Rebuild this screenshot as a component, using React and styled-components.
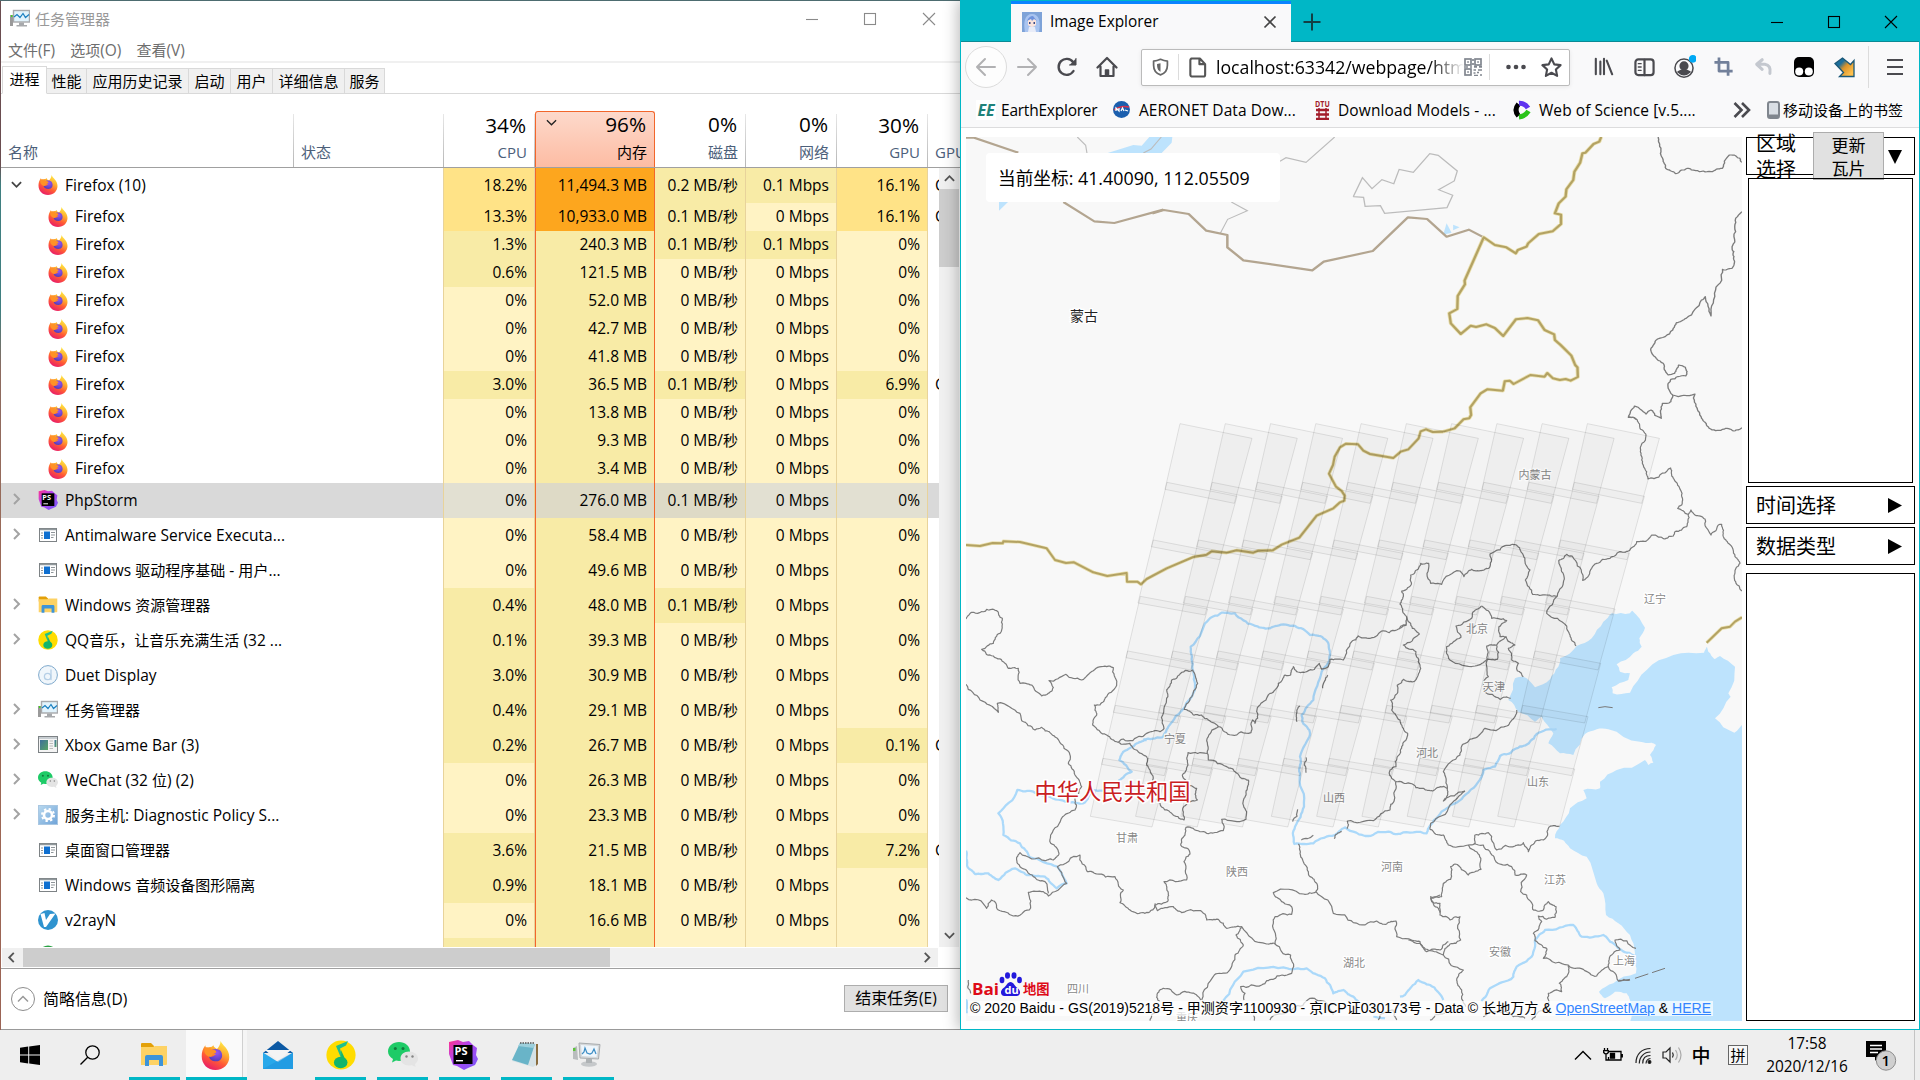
import React from "react";
import styled, { createGlobalStyle, css } from "styled-components";

const Global = createGlobalStyle`
  * { box-sizing: border-box; }
  html, body { margin: 0; padding: 0; overflow: hidden; }
  body { font-family: "Open Sans", "Noto Sans CJK SC", sans-serif; font-size: 15.5px; color: #000; }
  svg { display: block; flex: none; }
`;

/* ---------- shared ---------- */
const Han = styled.span`
  font-family: "Noto Sans CJK SC", sans-serif;
  font-size: ${(p) => p.$k}em;
  line-height: 0;
`;
const T = ({ children, k = 0.968 }) =>
  String(children)
    .split(/([\u3000-\u9fff\uff00-\uffef]+)/)
    .map((s, i) => (i % 2 ? <Han key={i} $k={k}>{s}</Han> : s));

const Screen = styled.div`
  width: 1920px;
  height: 1080px;
  display: grid;
  grid-template-rows: 1030px 50px;
  background: #eee;
`;
const Desktop = styled.div`
  display: flex;
  overflow: hidden;
  background: linear-gradient(#4d6c70 0 1px, #6a4d50 1px 16%, #3f7f80 18% 30%, #8d6b60 36%, #a06a55 60%, #9b6455);
`;

/* ---------- icons ---------- */
const FirefoxIcon = ({ s = 20 }) => (
  <svg width={s} height={s} viewBox="0 0 40 40">
    <defs>
      <linearGradient id="ff1" x1=".8" y1="0" x2=".3" y2="1">
        <stop offset="0" stopColor="#fff04a" />
        <stop offset=".35" stopColor="#ffb02e" />
        <stop offset=".65" stopColor="#ff5a35" />
        <stop offset="1" stopColor="#e81a6a" />
      </linearGradient>
      <radialGradient id="ff2" cx=".6" cy=".3" r=".8">
        <stop offset="0" stopColor="#9a55f2" />
        <stop offset="1" stopColor="#4a3ab4" />
      </radialGradient>
    </defs>
    <path fill="url(#ff1)" d="M27 0c2 6 12 10 12 22 0 10-8 18-19 18S1 32 1 21c0-5 1-10 5-15 0 2 1 4 2 5 2-2 4-3 7-3l2-2c1 3 3 4 5 5 2-2 5-6 5-11z" />
    <path fill="url(#ff2)" d="M13 14c4-4 12-4 15 1 3 6 0 13-7 13-6 0-10-3-10-8 2 2 4 2 6 1l4-3c-3 0-7-1-8-4z" />
    <path fill="#ff9226" d="M6 9c3-1 7 0 9 3 2 0 6 0 6 3 0 2-4 2-5 4-1 3-4 4-8 1-4-3-4-8-2-11z" />
  </svg>
);
const PhpStormIcon = ({ s = 20 }) => (
  <svg width={s} height={s} viewBox="0 0 30 30">
    <defs>
      <linearGradient id="ps1" x1="0" y1="0" x2="1" y2="1">
        <stop offset="0" stopColor="#ff318c" />
        <stop offset=".4" stopColor="#b345f1" />
        <stop offset="1" stopColor="#765af8" />
      </linearGradient>
    </defs>
    <path fill="url(#ps1)" d="M1 2 10 0l5 2 6-1 4 4 4 3-1 7 2 4-3 6-7 3-4 2-7-4-4-1L1 14z" />
    <rect x="5.500" y="5" width="19" height="19" />
    <text x="6.500" y="15" fontSize="11" fontWeight="700" fill="#fff" fontFamily="Open Sans, sans-serif">PS</text>
    <rect x="8" y="20" width="7" height="1.400" fill="#fff" />
  </svg>
);
const AppIcon = () => (
  <svg width="20" height="20" viewBox="0 0 20 20">
    <rect x="1.500" y="3.500" width="17" height="13" fill="#fff" stroke="#7d8285" />
    <path d="M2 4.500h16" stroke="#90989c" strokeWidth="1.500" />
    <rect x="6" y="6.500" width="6" height="7.500" fill="#0f6fd0" />
    <path d="M3 8h2M3 10.500h2M3 13h2M13 7.500h4M13 10h4M13 12.500h2.500" stroke="#8f9599" />
  </svg>
);
const XboxBarIcon = () => (
  <svg width="20" height="20" viewBox="0 0 20 20">
    <defs><linearGradient id="xb" x1="0" y1="0" x2="1" y2="1"><stop stopColor="#3c6e9c" /><stop offset="1" stopColor="#57a565" /></linearGradient></defs>
    <rect x=".5" y="1.500" width="19" height="16" fill="#f4f4f4" stroke="#7d8285" />
    <path d="M1 3h18" stroke="#c8ced2" strokeWidth="2" />
    <rect x="2" y="5" width="8" height="10" fill="url(#xb)" /><rect x="16.500" y="5" width="2" height="7" fill="url(#xb)" />
    <path d="M11.500 6H15M11.500 8.500H15M11.500 11H15M11.500 13.500H15" stroke="#bbb" />
  </svg>
);
const FolderIcon = ({ s = 20 }) => (
  <svg width={s} height={s} viewBox="0 0 28 28">
    <path d="M1 3q0-1 1-1h9l3 3v4H1z" fill="#e3a008" />
    <path d="M1 6h12l2-1h12v18q0 1-1 1H1z" fill="#fdd264" />
    <path d="M5 25V16q0-2 2-2h14q2 0 2 2v9h-4v-6h-10v6z" fill="#3d94d9" />
  </svg>
);
const QQMusicIcon = ({ s = 20 }) => (
  <svg width={s} height={s} viewBox="0 0 30 30">
    <circle cx="15" cy="15" r="14.600" fill="#ffdc00" />
    <path d="M22 1 10 6l5 12 2 .5L14 8.500l6-3z" fill="#1fc08b" />
    <ellipse cx="14.700" cy="22.500" rx="6.800" ry="5.700" fill="#12b56c" />
    <path d="M15 10l5.500 12h-5z" fill="#12b56c" />
  </svg>
);
const DuetIcon = () => (
  <svg width="20" height="20" viewBox="0 0 20 20">
    <circle cx="10" cy="10" r="9.400" fill="#f0f6fb" stroke="#7ea9cc" />
    <circle cx="9.600" cy="11.500" r="3.200" fill="none" stroke="#b6cfe6" strokeWidth="1.300" /><path d="M13 4.500V15" stroke="#b6cfe6" strokeWidth="1.300" />
  </svg>
);
const TaskMgrIcon = ({ s = 20 }) => (
  <svg width={s} height={s} viewBox="0 0 20 20">
    <rect x="0" y="6" width="3" height="11" fill="#9a9a9a" /><rect x="1" y="6" width="1.500" height="2" fill="#43d31e" />
    <rect x="3.500" y="1.500" width="16" height="11.500" fill="#e2f3fc" stroke="#a7a9ac" strokeWidth="1.400" />
    <path d="M4 8l3-2.500L10 8.500l3-4 2.500 4L19 5.500" fill="none" stroke="#197fc0" strokeWidth="1.200" />
    <path d="M9 13.500h5v2.500h3v1.500H6.500V16H9z" fill="#a7a9ac" />
  </svg>
);
const TaskMgrBigIcon = () => (
  <svg width="30" height="30" viewBox="1 0 30 30">
    <path d="M2 8l4-2 1 14-5-1z" fill="#b9bcbe" /><rect x="2" y="8" width="2.500" height="3" fill="#5cc33a" />
    <path d="M8 3 29 4.500 27.500 19 9 18z" fill="#d5d8da" stroke="#a8acae" />
    <path d="M10 5 27 6.200 25.500 17 11 16z" fill="#eef6fc" />
    <path d="M11 14l2-2 1-4 2 5 3 1 2-1 2-4 2 5" fill="none" stroke="#3d8dc4" strokeWidth="1.200" />
    <ellipse cx="18" cy="24" rx="8" ry="2.800" fill="#c5c8ca" /><rect x="15" y="19" width="6" height="4" fill="#aeb2b4" />
  </svg>
);
const WeChatIcon = ({ s = 20 }) => (
  <svg width={s} height={s} viewBox="0 0 30 30">
    <path d="M11 2c6 0 11 4 11 9.500S17 21 11 21l-3-.5L4 22.500 5 19C2 17 0 14.500 0 11.500 0 6 5 2 11 2z" fill="#1ecb67" />
    <circle cx="7.300" cy="8.500" r="1.500" fill="#117a3d" /><circle cx="15" cy="8.500" r="1.500" fill="#117a3d" />
    <path d="M21 11.500c5 0 9 3 9 7 0 2.300-1.200 4.200-3 5.500l.6 3-3.600-1.700-3 .2c-5 0-8.500-3-8.500-7s3.500-7 8.500-7z" fill="#e4e4e4" />
    <circle cx="18.500" cy="16.500" r="1.200" fill="#858585" /><circle cx="24.500" cy="16.500" r="1.200" fill="#858585" />
  </svg>
);
const GearIcon = () => (
  <svg width="20" height="20" viewBox="0 0 20 20">
    <defs><linearGradient id="ge" x1="0" y1="0" x2="1" y2="1"><stop stopColor="#b9d9ef" /><stop offset="1" stopColor="#6fa3d8" /></linearGradient></defs>
    <rect x=".5" y=".5" width="19" height="19" fill="url(#ge)" stroke="#a9c7e2" />
    <circle cx="10" cy="10" r="4" fill="none" stroke="#fff" strokeWidth="2.600" />
    <circle cx="10" cy="10" r="6" fill="none" stroke="#fff" strokeWidth="2" strokeDasharray="2.350 2.350" />
  </svg>
);
const V2Icon = () => (
  <svg width="20" height="20" viewBox="0 0 20 20">
    <circle cx="10" cy="10" r="10" fill="#2f93cf" />
    <path d="M2.500 4l4-1 1.500 7 4-6 5.500-.5L8 17H6z" fill="#fff" />
  </svg>
);
const GreenDot = () => <svg width="20" height="20" viewBox="0 0 20 20"><circle cx="10" cy="10" r="9.500" fill="#2ba245" /></svg>;

const Chev = ({ dir = "r", s = 11, c = "#a3a3a3", w = 2 }) => {
  const d = { r: "M3 1l5 5-5 5", l: "M8.500 1l-5 5 5 5", d: "M1 3.500l5 5 5-5", u: "M1 8.500l5-5 5 5" }[dir];
  return <svg width={s} height={s} viewBox="0 0 12 12"><path d={d} fill="none" stroke={c} strokeWidth={w} /></svg>;
};

/* ---------- task manager ---------- */
const TmWindow = styled.section`
  width: 959px;
  margin: 1px 0 0 1px;
  height: 1029px;
  background: #fff;
  border-bottom: 1px solid #999;
  display: flex;
  flex-direction: column;
  flex: none;
`;
const TmTitle = styled.header`
  height: 38px;
  padding: 0 0 2px 9px;
  display: flex;
  align-items: center;
  gap: 5px;
  color: #999;
`;
const TmButtons = styled.div`
  margin-left: auto;
  display: flex;
  padding-right: 2px;
`;
const WinBtn = styled.span`
  width: ${(p) => p.$w}px;
  display: flex;
  justify-content: center;
  align-items: center;
`;
const WinGlyph = ({ kind, c, s = 14 }) => (
  <svg width={s} height={s} viewBox="0 0 14 14" fill="none" stroke={c} strokeWidth="1.100">
    {kind === "min" && <path d="M1 7.500h12" />}
    {kind === "max" && <rect x="1.500" y="1.500" width="11" height="11" />}
    {kind === "close" && <path d="M1 1l12 12M13 1L1 13" />}
  </svg>
);
const TmMenu = styled.nav`
  height: 24px;
  padding-left: 7px;
  display: flex;
  align-items: center;
  gap: 15px;
  color: #6e6e6e;
  border-bottom: 2px solid #f0f0f0;
`;
const TmTabs = styled.div`
  height: 31px;
  padding: 3px 0 0 1px;
  display: flex;
  align-items: flex-end;
  box-shadow: inset 0 -1px #d9d9d9;
`;
const TmTab = styled.span`
  width: ${(p) => p.$w}px;
  height: 26px;
  display: flex;
  align-items: center;
  justify-content: center;
  background: #f0f0f0;
  border: 1px solid #d9d9d9;
  border-left-width: 0;
  white-space: nowrap;
  ${(p) => p.$on && css`
    height: 28px;
    background: #fff;
    border-left-width: 1px;
    border-bottom-color: #fff;
    padding-bottom: 3px;
  `}
`;
const Head = styled.div`
  height: 74px;
  display: flex;
  align-items: flex-end;
  border-bottom: 1px solid #a0a0a0;
  overflow: hidden;
`;
const HeadCell = styled.div`
  width: ${(p) => p.$w}px;
  height: 53px;
  flex: none;
  border-right: 1px solid;
  border-image: linear-gradient(#e8e8e8, #b5b5b5) 1;
  color: #4c607a;
  padding: 0 ${(p) => (p.$left ? 0 : 7)}px 4px ${(p) => (p.$left ? 7 : 0)}px;
  display: flex;
  flex-direction: column;
  justify-content: flex-end;
  align-items: ${(p) => (p.$left ? "flex-start" : "flex-end")};
  position: relative;
  white-space: nowrap;
  span { line-height: 21px; font-size: 15px; }
  strong { font-weight: 400; font-size: 20.7px; line-height: 28px; color: #000; margin: 0 1px 3px 0; }
  ${(p) => p.$hot && css`
    height: 56px;
    border: 1px solid #f2662b;
    border-bottom: 0;
    border-radius: 3px 3px 0 0;
    background: linear-gradient(#fdd9cb, #fdbca3);
    color: #000;
  `}
`;
const SortMark = styled.i`
  position: absolute;
  left: 10px;
  top: 5px;
`;
const Body = styled.div`
  height: 779px;
  display: flex;
`;
const Rows = styled.div`
  width: 938px;
  height: 779px;
  overflow: hidden;
`;
const Row = styled.div`
  height: ${(p) => (p.$child ? 28 : 35)}px;
  padding-left: 1px;
  display: flex;
  background: ${(p) => (p.$sel ? "#d9d9d9" : "transparent")};
`;
const NameCell = styled.div`
  width: 441px;
  flex: none;
  display: flex;
  align-items: center;
  white-space: nowrap;
  letter-spacing: 0.02px;
`;
const NameText = styled.span`
  padding-bottom: 2px;
`;
const Expander = styled.span`
  width: ${(p) => (p.$child ? 46 : 36)}px;
  padding-left: 9px;
  padding-bottom: 3px;
`;
const IconBox = styled.span`
  width: 27px;
  padding-bottom: 1px;
`;
const levels = { a: "#fff3c4", b: "#f8eba6", c: "#ffe387", d: "#fda61e" };
const selLevels = { a: "#e2e0d2", b: "#dedac6" };
const Cell = styled.div`
  width: ${(p) => p.$w}px;
  flex: none;
  background: ${(p) => (p.$sel ? selLevels : levels)[p.$l]};
  border-right: 1px solid ${(p) => (p.$mem ? "#f2662b" : "#e8d39b")};
  border-left: ${(p) => (p.$mem ? "1px solid #f2662b" : p.$first ? "1px solid #e8d39b" : 0)};
  padding: 0 7px 2px 0;
  display: flex;
  align-items: center;
  justify-content: flex-end;
  white-space: pre;
`;
const Engine = styled.div`
  padding: 0 0 2px 7px;
  width: 11px;
  overflow: hidden;
  display: flex;
  align-items: center;
`;
const VScroll = styled.div`
  width: 20px;
  background: #f0f0f0;
  display: flex;
  flex-direction: column;
  align-items: center;
  justify-content: space-between;
  padding: 5px 0 6px;
  position: relative;
`;
const VThumb = styled.div`
  position: absolute;
  left: 0;
  right: 0;
  top: 21px;
  height: 78px;
  background: #cdcdcd;
`;
const HScroll = styled.div`
  width: 936px;
  height: 19px;
  margin: 1px 0 1px 1px;
  background: #f0f0f0;
  display: flex;
  align-items: center;
  padding: 0 5px 0 4px;
`;
const HThumb = styled.div`
  width: 587px;
  height: 19px;
  margin: 0 auto 0 6px;
  background: #cdcdcd;
`;
const Foot = styled.footer`
  flex: 1;
  border-top: 1px solid #a0a0a0;
  display: flex;
  align-items: center;
  padding: 0 12px 1px 10px;
`;
const Circle = styled.span`
  width: 24px;
  height: 24px;
  border: 1px solid #8d8d8d;
  border-radius: 50%;
  display: grid;
  place-items: center;
  margin-right: 8px;
`;
const EndBtn = styled.button`
  margin-left: auto;
  width: 104px;
  height: 27px;
  padding: 0 0 2px;
  font: inherit;
  background: #e1e1e1;
  border: 1px solid #adadad;
  white-space: nowrap;
`;

const ff = <FirefoxIcon />;
const rows = [
  ["v", ff, "Firefox (10)", "18.2%c", "11,494.3d", "0.2b", "0.1b", "16.1%c", 1],
  ["c", ff, "Firefox", "13.3%c", "10,933.0d", "0.1b", "0a", "16.1%c", 1],
  ["c", ff, "Firefox", "1.3%b", "240.3b", "0.1b", "0.1b", "0%a"],
  ["c", ff, "Firefox", "0.6%b", "121.5b", "0a", "0a", "0%a"],
  ["c", ff, "Firefox", "0%a", "52.0b", "0a", "0a", "0%a"],
  ["c", ff, "Firefox", "0%a", "42.7b", "0a", "0a", "0%a"],
  ["c", ff, "Firefox", "0%a", "41.8b", "0a", "0a", "0%a"],
  ["c", ff, "Firefox", "3.0%b", "36.5b", "0.1b", "0a", "6.9%b", 1],
  ["c", ff, "Firefox", "0%a", "13.8b", "0a", "0a", "0%a"],
  ["c", ff, "Firefox", "0%a", "9.3b", "0a", "0a", "0%a"],
  ["c", ff, "Firefox", "0%a", "3.4b", "0a", "0a", "0%a"],
  ["s", <PhpStormIcon />, "PhpStorm", "0%a", "276.0b", "0.1b", "0a", "0%a"],
  [">", <AppIcon />, "Antimalware Service Executa...", "0%a", "58.4b", "0a", "0a", "0%a"],
  ["", <AppIcon />, "Windows 驱动程序基础 - 用户...", "0%a", "49.6b", "0a", "0a", "0%a"],
  [">", <FolderIcon />, "Windows 资源管理器", "0.4%b", "48.0b", "0.1b", "0a", "0%a"],
  [">", <QQMusicIcon />, "QQ音乐，让音乐充满生活 (32 ...", "0.1%b", "39.3b", "0a", "0a", "0%a"],
  ["", <DuetIcon />, "Duet Display", "3.0%b", "30.9b", "0a", "0a", "0%a"],
  [">", <TaskMgrIcon />, "任务管理器", "0.4%b", "29.1b", "0a", "0a", "0%a"],
  [">", <XboxBarIcon />, "Xbox Game Bar (3)", "0.2%b", "26.7b", "0a", "0a", "0.1%b", 1],
  [">", <WeChatIcon />, "WeChat (32 位) (2)", "0%a", "26.3b", "0a", "0a", "0%a"],
  [">", <GearIcon />, "服务主机: Diagnostic Policy S...", "0%a", "23.3b", "0a", "0a", "0%a"],
  ["", <AppIcon />, "桌面窗口管理器", "3.6%b", "21.5b", "0a", "0a", "7.2%b", 1],
  ["", <AppIcon />, "Windows 音频设备图形隔离", "0.9%b", "18.1b", "0a", "0a", "0%a"],
  ["", <V2Icon />, "v2rayN", "0%a", "16.6b", "0a", "0a", "0%a"],
  ["", <GreenDot />, "", "b", "b", "a", "a", "a"],
];
const val = (s, unit = "") => (s.length > 1 ? s.slice(0, -1) + unit : "");
const lev = (s) => s.slice(-1);

const TaskManager = () => (
  <TmWindow>
    <TmTitle>
      <TaskMgrIcon /><span><T>任务管理器</T></span>
      <TmButtons>
        {["min", "max", "close"].map((k) => <WinBtn key={k} $w={58.5}><WinGlyph kind={k} c="#8a8a8a" /></WinBtn>)}
      </TmButtons>
    </TmTitle>
    <TmMenu>{["文件(F)", "选项(O)", "查看(V)"].map((m) => <span key={m}><T>{m}</T></span>)}</TmMenu>
    <TmTabs>
      {[["进程", 45], ["性能", 40], ["应用历史记录", 102], ["启动", 42], ["用户", 42], ["详细信息", 72], ["服务", 40]].map(([t, w], i) => (
        <TmTab key={t} $w={w} $on={i === 0}><span><T>{t}</T></span></TmTab>
      ))}
    </TmTabs>
    <Head>
      <HeadCell $w={293} $left><span><T k={1}>名称</T></span></HeadCell>
      <HeadCell $w={150} $left><span><T k={1}>状态</T></span></HeadCell>
      <HeadCell $w={91}><strong>34%</strong><span>CPU</span></HeadCell>
      <HeadCell $w={120} $hot><SortMark><Chev dir="d" c="#222" w={1.4} /></SortMark><strong>96%</strong><span><T k={1}>内存</T></span></HeadCell>
      <HeadCell $w={91}><strong>0%</strong><span><T k={1}>磁盘</T></span></HeadCell>
      <HeadCell $w={91}><strong>0%</strong><span><T k={1}>网络</T></span></HeadCell>
      <HeadCell $w={91}><strong>30%</strong><span>GPU</span></HeadCell>
      <HeadCell $w={100} $left><span><T k={1}>GPU 引擎</T></span></HeadCell>
    </Head>
    <Body>
      <Rows>
        {rows.map(([kind, icon, name, cpu, mem, disk, net, gpu, eng], i) => {
          const child = kind === "c";
          const sel = kind === "s";
          return (
            <Row key={i} $child={child} $sel={sel}>
              <NameCell>
                <Expander $child={child}>
                  {kind === "v" && <Chev dir="d" c="#444" />}
                  {(kind === ">" || sel) && <Chev s={12} />}
                </Expander>
                <IconBox>{icon}</IconBox>
                <NameText><T>{name}</T></NameText>
              </NameCell>
              <Cell $w={92} $l={lev(cpu)} $sel={sel} $first>{val(cpu)}</Cell>
              <Cell $w={120} $l={lev(mem)} $sel={sel} $mem>{val(mem, " MB")}</Cell>
              <Cell $w={91} $l={lev(disk)} $sel={sel}><span><T>{val(disk, " MB/秒")}</T></span></Cell>
              <Cell $w={91} $l={lev(net)} $sel={sel}>{val(net, " Mbps")}</Cell>
              <Cell $w={91} $l={lev(gpu)} $sel={sel}>{val(gpu)}</Cell>
              <Engine>{eng && "GPU"}</Engine>
            </Row>
          );
        })}
      </Rows>
      <VScroll><Chev dir="u" c="#555" /><VThumb /><Chev dir="d" c="#555" /></VScroll>
    </Body>
    <HScroll><Chev dir="l" c="#555" /><HThumb /><Chev c="#555" /></HScroll>
    <Foot>
      <Circle><Chev dir="u" s={12} c="#999" w={1.5} /></Circle>
      <span><T k={1.03}>简略信息(D)</T></span>
      <EndBtn><T k={1.03}>结束任务(E)</T></EndBtn>
    </Foot>
  </TmWindow>
);

/* ---------- browser chrome ---------- */
const FfWindow = styled.section`
  width: 960px;
  height: 1030px;
  flex: none;
  position: relative;
  background: #fff;
  border: solid #00b7c6;
  border-width: 0 1px 1px 1px;
  box-shadow: -2px 0 14px rgba(0, 0, 0, 0.28);
`;
const TabStrip = styled.div`
  height: 42px;
  padding: 1px 0 0 50px;
  background: #00b7c6;
  box-shadow: inset 0 -1px #0a8a95;
  display: flex;
`;
const Tab = styled.div`
  width: 280px;
  background: #f9f9fa;
  border-top: 3px solid #0a84ff;
  display: flex;
  align-items: center;
  padding: 0 14px 2px 11px;
  font-size: 15.4px;
`;
const TabTitle = styled.span`
  margin: 0 auto 0 8px;
  padding-bottom: 2px;
`;
const NewTab = styled.span`
  width: 42px;
  display: grid;
  place-items: center;
`;
const FfButtons = styled.div`
  margin-left: auto;
  display: flex;
`;
const NavBar = styled.div`
  height: 50px;
  padding-left: 6px;
  background: #f9f9fa;
  display: flex;
  align-items: center;
`;
const Slot = styled.span`
  width: ${(p) => p.$w || 40}px;
  height: 42px;
  flex: none;
  display: grid;
  place-items: center;
  ${(p) => p.$ring && css`border: 1px solid #dcdcdc; border-radius: 50%; width: 42px; margin: 0 0 0 -2px; background: #fdfdfd;`}
`;
const UrlBar = styled.div`
  width: 429px;
  height: 37px;
  margin: 0 14px 0 14px;
  background: #fff;
  border: 1px solid #bbb;
  border-radius: 2px;
  box-shadow: 0 1px 4px rgba(0, 0, 0, 0.08);
  display: flex;
  align-items: center;
  flex: none;
`;
const Sep = styled.i`
  width: 1px;
  height: ${(p) => p.$h}px;
  background: #dcdcdc;
  flex: none;
`;
const UrlText = styled.span`
  width: 248px;
  overflow: hidden;
  white-space: nowrap;
  font-size: 17.7px;
  mask-image: linear-gradient(90deg, #000 86%, transparent 100%);
`;
const BookmarkBar = styled.div`
  height: 36px;
  background: #f9f9fa;
  border-bottom: 1px solid #dcdcdd;
  display: flex;
  align-items: center;
  white-space: nowrap;
`;
const Bookmark = styled.span`
  width: ${(p) => p.$w}px;
  flex: none;
  display: flex;
  align-items: center;
  gap: ${(p) => p.$gap || 5}px;
  padding-left: ${(p) => p.$pl || 0}px;
  letter-spacing: ${(p) => p.$ls || 0}px;
`;

const Ico = ({ s = 22, children, c = "#4a4a4f", w = 2 }) => (
  <svg width={s} height={s} viewBox="0 0 22 22" fill="none" stroke={c} strokeWidth={w} strokeLinecap="round" strokeLinejoin="round">{children}</svg>
);
const Avatar = () => (
  <svg width="20" height="20" viewBox="0 0 20 20">
    <rect width="20" height="20" fill="#7ea3d8" />
    <path d="M3 20C1 10 3 2 10 2s9 8 7 18z" fill="#a9c4f0" />
    <path d="M6 8q4-4 8 0v5q-4 4-8 0z" fill="#fbe4dc" />
    <path d="M5 9q2-5 6-5l4 5-3-2-2 2-1-2z" fill="#6f93dc" />
    <rect x="7" y="10" width="1.500" height="2" fill="#3c4a86" /><rect x="11.500" y="10" width="1.500" height="2" fill="#3c4a86" />
    <path d="M7 15h6l1 5H6z" fill="#e8ecf8" />
  </svg>
);
const Qr = () => (
  <svg width="18" height="18" viewBox="0 0 18 18" fill="none" stroke="#81868f" strokeWidth="1.700">
    <rect x="1" y="1" width="6" height="6" /><rect x="11" y="1" width="6" height="6" /><rect x="1" y="11" width="6" height="6" />
    <path d="M3.200 4h1.700M13.200 4h1.700M3.200 14h1.700M10 8.800h3M15 8.800h3M0 9h4M6 9h2M9.500 12h2.500M14 12h4M9.500 15h2M13 14.500h2M16 17h2M10 17.500h4M9 1v2M9 5v2" />
  </svg>
);

const EE = styled.b`
  width: 20px;
  height: 20px;
  background: #fff;
  color: #1f8279;
  font: italic 700 16px/20px "Open Sans", sans-serif;
  text-align: center;
`;

const Chrome = () => (
  <>
    <TabStrip>
      <Tab>
        <Avatar /><TabTitle>Image Explorer</TabTitle>
        <svg width="14" height="14" viewBox="0 0 14 14"><path d="M1.500 1.500l11 11M12.500 1.500l-11 11" stroke="#444" strokeWidth="1.700" /></svg>
      </Tab>
      <NewTab><svg width="18" height="18" viewBox="0 0 18 18"><path d="M9 .5v17M.5 9h17" stroke="#123f44" strokeWidth="2" /></svg></NewTab>
      <FfButtons>
        {["min", "max", "close"].map((k) => <WinBtn key={k} $w={56.700}><WinGlyph kind={k} c="#000" /></WinBtn>)}
      </FfButtons>
    </TabStrip>
    <NavBar>
      <Slot $ring><Ico c="#b1b1b3"><path d="M20 11H2M10 3l-8 8 8 8" /></Ico></Slot>
      <Slot><Ico c="#b1b1b3"><path d="M2 11h18M12 3l8 8-8 8" /></Ico></Slot>
      <Slot><Ico w={2.4}><path d="M17.500 15A8 8 0 1 1 17 6l2 2" /><path d="M20 2.500v6.500h-6.500" fill="#4a4a4f" strokeWidth="1" /></Ico></Slot>
      <Slot><Ico w={2.2}><path d="M1.500 11.500 11 2l9.500 9.500M4.500 10.500V20h13v-9.500" /><path d="M9.500 20v-6h3v6" fill="#4a4a4f" strokeWidth="1.500" /></Ico></Slot>
      <UrlBar>
        <Slot $w={36}><Ico s={19} c="#666"><path d="M11 2c3 1.500 6 2 8 2v5c0 6-3 9.500-8 11-5-1.500-8-5-8-11V4c2 0 5-.5 8-2z" transform="translate(0 -.5)" /><path d="M11 6v10c-3-1.500-4-4-4-9z" fill="#666" stroke="none" /></Ico></Slot>
        <Sep $h={26} />
        <Slot $w={37}><Ico s={21} c="#555" w={2.200}><path d="M4.500 1.500h9l5.500 6V18.500q0 2-2 2h-11Q3.500 20.500 3.500 18.500V3.500q0-2 2-2zM13 2v5.500h5.500" /></Ico></Slot>
        <UrlText>localhost:63342/webpage/html</UrlText>
        <Slot $w={18}><Qr /></Slot>
        <Slot $w={15}><Sep $h={26} /></Slot>
        <Slot $w={38}><svg width="20" height="6" viewBox="0 0 20 6" fill="#4a4a4f"><circle cx="2.500" cy="3" r="2.300" /><circle cx="10" cy="3" r="2.300" /><circle cx="17.500" cy="3" r="2.300" /></svg></Slot>
        <Slot $w={32}><Ico s={21} w={2.200}><path d="M11 1.500l2.900 6.200 6.600.8-4.900 4.600 1.300 6.700-5.900-3.300-5.900 3.300 1.300-6.700L1.500 8.500l6.600-.8z" /></Ico></Slot>
      </UrlBar>
      <Slot><Ico s={20} w={2.300}><path d="M2 2v17M7 5v14M11 2v17M14 4l6 15" /></Ico></Slot>
      <Slot><Ico s={21} w={2.300}><rect x="1.500" y="2.500" width="19" height="16.500" rx="3" /><path d="M11 3v16" /><path d="M4.500 7h3M4.500 10.500h3M4.500 14h3" strokeWidth="1.400" /></Ico></Slot>
      <Slot><Ico s={24} w={1.400}><circle cx="11" cy="12" r="8.300" /><circle cx="11" cy="10" r="3.500" fill="#4a4a4f" /><path d="M5.500 15.500q5.500-3.500 11 0-5.500 5-11 0z" fill="#4a4a4f" /><circle cx="19" cy="3.500" r="2.800" fill="#00a9f4" stroke="#00a9f4" /></Ico></Slot>
      <Slot><Ico s={20} c="#72809a" w={3}><path d="M5.500 2v13.500H19M2 6h13.500V19" strokeLinecap="square" /></Ico></Slot>
      <Slot><Ico s={20} c="#c4c8cf" w={3.400}><path d="M9 3 3 8l6 5.500M4 8h8q7 1 5.500 10" /></Ico></Slot>
      <Slot><svg width="20" height="20" viewBox="0 0 20 20"><rect width="20" height="20" rx="5" /><circle cx="5.200" cy="14.500" r="4" fill="#fff" /><circle cx="14.800" cy="14.500" r="4" fill="#fff" /></svg></Slot>
      <Slot><svg width="21" height="21" viewBox="-.5 -.5 21 21"><defs><linearGradient id="ar" x1="0" y1="0" x2="1" y2="1"><stop offset=".3" stopColor="#1d6f9c" /><stop offset=".5" stopColor="#d9932b" /><stop offset=".85" stopColor="#ffc14d" /></linearGradient></defs><path d="M.5 6 8 .5l8 6.500 3.500-4V19H5l4-4z" fill="url(#ar)" stroke="#1a5878" strokeWidth="1.300" /></svg></Slot>
      <Slot $w={8}><Sep $h={42} /></Slot>
      <Slot $w={46}><svg width="16" height="18" viewBox="0 0 16 18"><path d="M0 2h16M0 9h16M0 16h16" stroke="#4a4a4f" strokeWidth="2.200" /></svg></Slot>
    </NavBar>
    <BookmarkBar>
      <Bookmark $w={152} $pl={15} $ls={-0.23}><EE>EE</EE>EarthExplorer</Bookmark>
      <Bookmark $w={202} $gap={9} $ls={0.06}>
        <svg width="17" height="17" viewBox="0 0 17 17"><circle cx="8.500" cy="8.500" r="8.500" fill="#1b5fae" /><path d="M1 9q7-5 15-3" stroke="#d8304a" strokeWidth="1.500" fill="none" /><path d="M3 10V7l3 3V7M8 10l1.500-3L11 10M12 9l3 1" stroke="#fff" strokeWidth="1.300" fill="none" /></svg>
        AERONET Data Dow...
      </Bookmark>
      <Bookmark $w={197} $gap={8} $ls={0.12}>
        <svg width="15" height="20" viewBox="0 0 15 20"><text x="0" y="7" fontSize="8" fontWeight="700" textLength="15" lengthAdjust="spacingAndGlyphs" fill="#a31d2b" fontFamily="Open Sans, sans-serif">DTU</text><path d="M1 10h13M1 14.500h13M1 19h13" stroke="#a31d2b" strokeWidth="2.600" /><path d="M4 8v12M11 8v12" stroke="#a31d2b" strokeWidth="1.500" /></svg>
        Download Models - ...
      </Bookmark>
      <Bookmark $w={221} $gap={7} $ls={0.06}>
        <svg width="20" height="20" viewBox="0 0 20 20" fill="none" strokeWidth="5"><path d="M6.500 4Q1.500 10 6.500 16" stroke="#000" /><path d="M7 3.300Q13 3 16 8" stroke="#5e33ef" /><path d="M16.500 11Q13 16.500 7 17" stroke="#29c419" /></svg>
        Web of Science [v.5....
      </Bookmark>
      <Bookmark $w={34}>
        <svg width="18" height="16" viewBox="0 0 18 16"><path d="M1.500 1l7 7-7 7M9 1l7 7-7 7" stroke="#4a4a4f" strokeWidth="2.600" fill="none" /></svg>
      </Bookmark>
      <Bookmark $w={150} $gap={3}>
        <svg width="13" height="18" viewBox="0 0 13 18"><rect x="1" y="1" width="11" height="16" rx="2" fill="#d9dee4" stroke="#80868e" strokeWidth="2" /><path d="M1 15h11" stroke="#80868e" strokeWidth="3" /></svg>
        <span><T>移动设备上的书签</T></span>
      </Bookmark>
    </BookmarkBar>
  </>
);

/* ---------- map ---------- */
const parse = (s) => s.trim().split(/\s+/).map((p) => p.split(",").map(Number));
/* Midpoint displacement gives surveyed borders and coastlines their ragged edge. */
const rough = (s, amp = 0.16, depth = 3, close = false) => {
  let pts = parse(s);
  if (close) pts.push(pts[0]);
  let seed = pts[0][0] * 13 + pts.length * 7 + 5;
  const rnd = () => {
    seed = (seed * 9301 + 49297) % 233280;
    return seed / 233280 - 0.5;
  };
  for (let k = 0; k < depth; k++) {
    const out = [pts[0]];
    for (let i = 1; i < pts.length; i++) {
      const [ax, ay] = pts[i - 1];
      const [bx, by] = pts[i];
      const len = Math.hypot(bx - ax, by - ay);
      if (len > 6 && len < 250) {
        const m = rnd() * amp * 2;
        out.push([(ax + bx) / 2 - (by - ay) * m, (ay + by) / 2 + (bx - ax) * m]);
      }
      out.push(pts[i]);
    }
    pts = out;
  }
  return "M" + pts.map((p) => p.map((n) => n.toFixed(1)).join(" ")).join("L") + (close ? "Z" : "");
};
const line = (s) => "M" + parse(s).map((p) => p.join(" ")).join("L");

/* Sheets: each keeps its own local origin and scale. */
const sheets = {
  nw: "translate(960 0) scale(.33333)",
  n: "translate(1160 130) scale(.38265 .33333)",
  w: "translate(960 400) scale(.33333)",
  e: "translate(1400 400) scale(.33333)",
  sw: "translate(960 720) scale(.33333)",
  se: "translate(1400 720) scale(.33333)",
};
const provinces = {
  n: [
    "1302,21 1306,50 1315,90 1325,118 1348,131 1378,115 1400,122 1440,125 1470,115 1488,75 1505,78 1521,97",
    "1521,245 1502,290 1495,350 1500,380 1495,415 1470,418 1452,480 1440,558 1425,500 1415,510 1375,565 1350,578 1340,600 1295,632 1283,655 1297,685 1315,700 1328,735 1345,730 1355,705 1373,712 1374,738 1335,748 1328,760 1328,775 1340,795 1398,792 1405,840 1418,868 1435,895 1470,898 1500,903 1521,893",
    "1340,795 1335,815 1313,820 1310,865 1283,840 1270,852 1240,828 1224,862 1245,868",
  ],
  e: [
    "686,50 712,60 720,85 738,105 733,125 722,150 727,190 740,215 744,237 762,236 812,204 820,235 838,262 848,300 845,315 833,325 865,343 860,380 825,395 820,408 795,417 755,405 740,422 710,425 690,450 660,455 630,475 590,490 575,505 548,541 527,482 500,463 476,482 485,515 487,560 472,588 440,585 398,583 376,540 390,510 378,495 365,458 345,434 315,437 300,450 270,462 266,505 240,512 215,508 192,530 180,513 125,553 92,550 86,490 62,490 50,510 32,525 33,555 5,573 10,590 0,612 20,650 37,685 58,702 10,735 48,755 60,795 50,835 40,845 10,838 -8,855 -8,880 -28,900 -25,930 0,960 10,985 23,1000 5,1040 -8,1070 -12,1100 -30,1110 -25,1135 -13,1145",
    "865,343 873,330 885,345 915,357 933,405 955,375 965,373 970,410 985,430 1005,470 1020,490 1005,515 1007,545 1026,573",
    "245,618 220,635 215,655 168,678 183,712 140,740 150,780 225,798 262,778 292,778 290,735 318,710 345,735 325,745 335,780 355,790 352,812 370,830",
    "245,618 275,655 320,662 297,680 300,710 318,712",
    "290,735 260,738 262,778 265,830 250,875 300,898 332,895",
    "472,588 440,640 500,678 510,705 528,738",
    "350,930 345,950 320,978 255,985 220,1015 190,1032 180,1065 130,1115 142,1160 140,1190 130,1203 195,1173",
    "20,650 18,675 0,685",
  ],
  w: [
    "1340,675 1310,690 1265,693 1225,715 1195,708 1175,725 1150,780 1110,778 1105,800 1085,808 1078,790 1040,815 1010,815 1000,800 992,825 975,825 955,850 930,880 900,915 890,935 893,955 885,970 878,960 873,998 815,1005 775,980 745,960 725,945 700,945 673,928 690,895 713,850 698,810 658,825 635,840 620,870 613,920 612,985 600,995 560,1000 545,1010 490,1017 475,1027",
    "18,657 35,637 80,628 110,632 127,655 120,700 100,730 65,748 100,768 135,790 145,805 175,805 180,850 215,855 245,888 265,880 280,862 267,842 318,823 365,840 400,812 440,800 460,803 470,850 440,890 420,915 403,915 410,945 398,975 440,1005 475,1027",
    "18,853 60,900 115,937 112,910 180,940 185,962 225,990 245,982 270,998 300,1028 328,1058 325,1090 345,1125 365,1160 345,1200 345,1230 308,1250 272,1305 272,1330 297,1360 280,1380 255,1382 180,1358 170,1372 180,1400 220,1430 255,1445 265,1480",
    "1103,825 1088,865", "1020,918 1010,940 1011,965",
  ],
  sw: [
    "775,20 745,50 742,100 684,98 683,130 667,165 680,198 710,205 712,240 680,252 670,262 672,300 635,280 600,250 575,200 570,150 560,135 560,110 530,90 510,70 475,67",
    "742,100 745,120 800,140 825,155 840,172 865,180 862,205 852,235 860,275 858,298 785,298 790,332 740,340 700,325 678,322 675,345 662,375 690,402 672,425 680,480 612,485 625,520 622,545 585,555 578,570 555,580 510,570 480,548 490,510 465,470 410,462 382,455 360,405 292,440 320,490 265,528 250,515 205,517 208,570 160,588 115,570 94,540 80,565 18,533",
    "1307,185 1303,240 1290,270 1240,302 1162,303 1162,326",
    "1307,185 1350,190 1390,205 1418,213 1440,200 1462,205",
    "585,550 592,572 640,560 665,578 722,572 740,600 775,598 800,625 845,620 920,672 945,672 992,705 995,760 940,778 905,795 842,800 855,820 852,840",
    "845,622 828,645 850,675 825,705 805,755 763,765 725,840",
    "1015,372 1020,400 1040,440 1050,470 1070,490 1068,515 1030,522 940,518 965,545 995,560 995,583 945,590 940,610 945,672",
    "1068,515 1120,580 1180,608 1250,603 1280,612 1308,603 1310,650 1380,670 1400,695 1440,690 1465,665",
    "1440,525 1412,530 1415,545 1440,550 1440,578",
    "600,845 590,832 610,805 650,825 690,818 722,840", "570,902 575,885 590,875", "930,900 980,878 1000,865 1050,835 1100,850 1120,885", "880,885 883,902", "1255,900 1270,880 1300,870 1310,900",
    "1038,112 1033,135 1038,158", "1013,268 998,305", "1024,360 1060,346", "1123,356 1145,334", "25,780 32,820",
  ],
  se: [
    "195,213 150,255 92,310 90,328 130,345 145,375 205,375 225,370 225,345 265,338 290,390 345,378 370,368 385,395 405,365 430,360 445,325 478,318",
    "205,375 238,405 243,448 205,465 165,432 152,440 152,478 130,490 125,530 92,535 115,565 120,585 150,600 180,590 182,660 150,672 130,705 190,750 170,780 185,810 197,860",
    "222,370 270,395 285,420 335,440 345,465 380,465 362,515 380,525 398,568 430,570 445,545 468,560 465,592 415,588 425,605 400,640 405,662 440,685 430,715 505,735 550,748 590,768 625,740 640,700 660,690 645,660 708,685",
    "505,735 500,770 478,790 485,815 445,820 435,870 395,900", "625,740 655,783 690,780",
    "25,660 60,665 85,690 130,705", "90,900 105,885 135,880", "250,890 290,875 340,890 375,895",
  ],
};
const rivers = {
  w: ["550,1018 607,1012 625,980 675,920 705,850 697,800 692,740 735,670 785,638 825,640 880,675 930,685 950,678 1005,678 1050,705 1085,710 1105,730 1108,775 1085,815 1060,900 1025,945 1027,965 1048,990 1048,1010 1020,1070 1020,1120 1032,1220 1005,1280 1003,1332 1060,1330 1125,1305 1155,1282 1225,1308 1285,1295 1320,1302 1400,1300 1412,1275 1460,1225 1510,1190 1565,1130 1570,1110 1605,1100 1620,1068 1670,1045 1710,1025 1730,1002 1790,987"],
  sw: [
    "18,392 22,440 45,462 85,460 115,480 165,445 200,465 255,470 290,505 320,490 292,440 210,412 180,370 130,345 115,280 172,210 220,215 285,238 370,250 400,210 430,212",
    "475,182 515,155 478,120 490,95 530,70 560,60", "790,842 850,755 970,742 1040,745 1095,775 1120,820 1150,810 1180,830 1195,845",
    "1320,830 1335,825 1375,780 1410,795 1450,840", "18,838 20,880", "1240,890 1275,895",
  ],
  se: ["245,845 270,805 340,770 350,740 395,710 405,660 435,630 520,615 545,650 610,645 640,670 705,708"],
};
const sea =
  "635,640 690,640 697,632 735,683 718,715 725,740 700,760 650,793 660,815 690,820 685,840 635,862 638,880 690,878 740,810 820,765 912,758 920,740 925,755 943,777 960,768 1005,800 985,880 992,890 945,955 1003,998 1030,970 1300,970 1300,1866 690,1866 690,1800 680,1780 645,1775 615,1795 597,1775 640,1750 708,1720 705,1660 690,1605 655,1570 618,1545 610,1480 590,1450 560,1370 510,1345 492,1322 465,1315 480,1275 510,1225 560,1195 550,1170 600,1165 600,1145 650,1110 735,1080 745,1095 760,1088 750,1065 768,1035 755,1028 720,1025 625,988 590,988 555,1002 520,1065 480,1060 445,1030 460,1000 425,950 405,965 355,935 325,900 345,835 370,830 405,862 450,838 475,800 480,775 530,738 575,715 610,665";
const gold = {
  w: ["18,435 60,438 98,429 128,430 130,424 180,426 260,445 285,480 318,489 342,487 400,517 442,528 500,519 501,545 532,545 543,553 560,537 620,505 700,471 740,464 755,454 800,458 830,451 880,458 895,452 938,451 965,434 1018,413 1070,347 1120,325 1140,307 1153,302 1154,287 1145,273 1128,260 1107,221 1119,195 1124,170 1140,142 1158,131 1194,133 1210,152 1230,162 1300,174 1322,155 1345,148 1376,115 1382,94 1398,88 1418,96 1450,95"],
  n: [
    "740,905 770,895 793,868 808,865 813,855 811,832 838,790 855,778 896,782 901,754 914,752 924,762 968,735 1005,740 1012,729 1027,745 1045,750 1060,747 1073,752 1092,741 1091,712 1085,705 1075,677 1047,645 1032,630 1030,613 1005,600 988,571 960,564 930,568 897,618 875,594 853,583 826,591 812,587 786,612 760,580 756,550 777,537 778,498 797,463 796,452 846,322 875,345 905,352 930,370 935,360 958,350 962,340 990,312 1026,304 1048,282 1048,254 1032,250 1042,220 1060,200 1062,178 1080,150 1083,125 1098,98 1104,70 1112,68 1133,42 1148,35 1153,21",
  ],
  e: ["920,728 965,685 990,680 1005,665 1026,652"],
};
const brown = {
  nw: ["18,413 42,413 175,458", "310,606 403,664 463,669 610,629"],
  n: ["-20,250 10,240 75,252 121,302 176,315 176,352 218,391 398,421 428,395 556,363 648,262 698,267 749,320 807,299 846,322"],
};
const thin = {
  nw: ["352,411 377,436 381,460", "960,484 978,473 1038,487 1124,411", "814,606 862,632 803,658 781,700", "604,411 573,447 550,459"],
  n: ["505,200 529,143 554,176 580,149 611,161 625,118 662,127 705,71 727,76 777,123 769,153 728,179 765,196 750,233 587,250 576,227 536,229 532,202 505,200"],
};
const water = {
  nw: ["443,459 520,435 545,437 568,411 637,411 635,428 605,459", "117,606 144,606 117,632"],
  n: ["749,280 762,308 740,314", "766,284 783,292 766,301"],
};
/* Footprints of the image strips: one quad per row, repeated eastwards. */
const quads = [
  [660, 71, 876, 115, 823, 310, 615, 268],
  [621, 247, 831, 289, 779, 479, 574, 440],
  [580, 420, 786, 460, 735, 645, 534, 609],
  [541, 589, 743, 627, 692, 810, 498, 773],
  [503, 753, 700, 790, 652, 969, 460, 937],
  [466, 916, 662, 950, 613, 1127, 425, 1093],
  [429, 1075, 622, 1107, 576, 1281, 391, 1249],
];
const labels = [
  ["内蒙古", 1535, 475], ["辽宁", 1655, 599], ["北京", 1477, 629], ["天津", 1494, 687], ["宁夏", 1175, 739], ["河北", 1427, 753],
  ["山西", 1334, 798], ["山东", 1538, 782], ["甘肃", 1127, 838], ["陕西", 1237, 872], ["河南", 1392, 867], ["江苏", 1555, 880],
  ["安徽", 1500, 952], ["湖北", 1354, 963], ["四川", 1078, 989], ["上海", 1624, 961], ["重庆", 1187, 1018],
];
const Layer = ({ data, make, ...rest }) =>
  Object.entries(data).map(([k, list]) => (
    <g key={k} transform={sheets[k]} fill="none" {...rest}>
      {list.map((s, i) => <path key={i} d={make(s)} />)}
    </g>
  ));

const MapSvg = () => (
  <svg width="776" height="884" viewBox="966 137 776 884">
    <rect x="966" y="137" width="776" height="884" fill="#f8f8f8" />
    <g transform={sheets.e}><path d={rough(sea, 0.1, 2, true)} fill="#bde3fd" /></g>
    {Object.entries(water).map(([k, l]) => <g key={k} transform={sheets[k]} fill="#bde3fd">{l.map((s) => <path key={s} d={line(s) + "Z"} />)}</g>)}
    <Layer data={rivers} make={(s) => rough(s, 0.1)} stroke="#abd9fa" strokeWidth="6.800" strokeLinejoin="round" />
    <Layer data={provinces} make={(s) => rough(s)} stroke="#7c7c7c" strokeWidth="3.600" strokeLinejoin="round" />
    <Layer data={thin} make={line} stroke="#bcbcbc" strokeWidth="3.400" />
    <Layer data={brown} make={line} stroke="#b3a590" strokeWidth="6.600" strokeLinejoin="round" />
    <Layer data={gold} make={line} stroke="#e9dfae" strokeWidth="10.500" strokeLinejoin="round" />
    <Layer data={gold} make={line} stroke="#b3a263" strokeWidth="6" strokeLinejoin="round" />
    <g transform={sheets.e} stroke="#777" strokeWidth="3" fill="none"><path d="M595 923l20-3 23 3" /><path d="M655 1744l35-6M705 1735l90-30" strokeDasharray="42 12" /></g>
    <g fontFamily="Noto Sans CJK SC, sans-serif" textAnchor="middle" stroke="#fff" strokeWidth="2.500" paintOrder="stroke">
      {labels.map(([t, x, y]) => <text key={t} x={x} y={y + 4} fontSize="11" fill="#888">{t}</text>)}
      <text x="1084" y="320.500" fontSize="14" fill="#222">蒙古</text>
    </g>
    <g transform={sheets.w} fill="#000" fillOpacity=".019" stroke="#000" strokeOpacity=".1" strokeWidth="3">
      {quads.map((q, r) => Array.from({ length: 10 }, (_, c) => {
        const o = c * 135.8;
        return <path key={r + "-" + c} d={`M${q[0] + o} ${q[1]}L${q[2] + o} ${q[3]}L${q[4] + o} ${q[5]}L${q[6] + o} ${q[7]}Z`} />;
      }))}
    </g>
    <text x="1112.500" y="800" fontFamily="Noto Sans CJK SC, sans-serif" fontSize="22.300" textAnchor="middle" fill="#c9201f" stroke="#fff" strokeWidth="3" paintOrder="stroke">中华人民共和国</text>
    <g fill="#2319dc">
      <ellipse cx="1002" cy="980" rx="2.400" ry="3.200" /><ellipse cx="1007.500" cy="975.500" rx="2.500" ry="3.300" /><ellipse cx="1014" cy="975.500" rx="2.500" ry="3.300" /><ellipse cx="1019.500" cy="980" rx="2.400" ry="3.200" />
      <path d="M1010.500 982c3 0 4 4 7 6 4 3 3 8-1 8h-12c-4 0-5-5-1-8 3-2 4-6 7-6z" />
    </g>
    <g fontFamily="Open Sans, Noto Sans CJK SC, sans-serif" fontWeight="700">
      <text x="972" y="994.500" fontSize="16.500" fill="#de0a17" textLength="27" lengthAdjust="spacingAndGlyphs">Bai</text>
      <text x="1004.500" y="993.500" fontSize="11" fill="#fff">du</text>
      <text x="1023" y="993.500" fontSize="13.300" fill="#de0a17">地图</text>
    </g>
  </svg>
);

const Page = styled.main`
  display: flex;
  padding: 9px 4px 0 5px;
`;
const MapBox = styled.div`
  position: relative;
  width: 776px;
  height: 884px;
  overflow: hidden;
`;
const Coord = styled.div`
  position: absolute;
  left: 20px;
  top: 16px;
  width: 294px;
  height: 49px;
  padding: 1px 0 0 12px;
  background: #fff;
  border-radius: 4px;
  font-size: 17.85px;
  line-height: 49px;
  white-space: nowrap;
`;
const Copyright = styled.div`
  position: absolute;
  left: 2px;
  top: 864px;
  height: 15px;
  padding: 0 2px;
  background: rgba(255, 255, 255, 0.7);
  font: 14.07px/15px "Liberation Sans", "Noto Sans CJK SC", sans-serif;
  white-space: nowrap;
`;
const MapLink = styled.a`
  color: #3385ff;
  text-decoration: underline;
`;
const Side = styled.aside`
  width: 169px;
  margin-left: 4px;
  display: flex;
  flex-direction: column;
`;
const Bar = styled.div`
  height: 38px;
  margin-bottom: 3px;
  border: 1px solid #000;
  display: flex;
  align-items: center;
  padding-left: 9px;
  font-size: 20px;
  line-height: 26px;
  background: #fff;
`;
const BarText = styled.span`
  width: ${(p) => p.$w}px;
  padding-top: 2px;
  flex: none;
`;
const Update = styled.button`
  width: 71px;
  height: 48px;
  margin-left: 8px;
  padding: 0 16px;
  flex: none;
  background: #e1e1e1;
  border: 1px solid #adadad;
  font: 17px/23px "Noto Sans CJK SC", sans-serif;
  color: #000;
`;
const Mark = styled.svg`
  margin: 1px 12px 0 auto;
`;
const ListBox = styled.div`
  height: 305px;
  margin: 0 2px 3px;
  border: 1px solid #000;
`;
const Result = styled.div`
  height: 448px;
  margin-top: 5px;
  border: 1px solid #000;
`;

const Browser = () => (
  <FfWindow>
    <Chrome />
    <Page>
      <MapBox>
        <MapSvg />
        <Coord><T k={0.99}>当前坐标: 41.40090, 112.05509</T></Coord>
        <Copyright>
          © 2020 Baidu - GS(2019)5218号 - 甲测资字1100930 - 京ICP证030173号 - Data © 长地万方 &amp; <MapLink>OpenStreetMap</MapLink> &amp; <MapLink>HERE</MapLink>
        </Copyright>
      </MapBox>
      <Side>
        <Bar>
          <BarText $w={49}><T k={1}>区域选择</T></BarText>
          <Update>更新瓦片</Update>
          <Mark width="14" height="14" viewBox="0 0 14 14"><path d="M0 0h14L7 14z" /></Mark>
        </Bar>
        <ListBox />
        {["时间选择", "数据类型"].map((t) => (
          <Bar key={t}>
            <BarText $w={90}><T k={1}>{t}</T></BarText>
            <Mark width="14" height="15" viewBox="0 0 14 15"><path d="M0 0v15L14 7.500z" /></Mark>
          </Bar>
        ))}
        <Result />
      </Side>
    </Page>
  </FfWindow>
);

/* ---------- taskbar ---------- */
const TaskbarEl = styled.footer`
  height: 50px;
  background: #eee;
  display: flex;
  position: relative;
`;
const TaskSlot = styled.span`
  width: ${(p) => p.$w || 62}px;
  height: 50px;
  display: grid;
  place-items: center;
  padding-right: ${(p) => p.$pr || 0}px;
  box-shadow: ${(p) => (p.$run ? "inset 0 -3px #00b7c6" : "none")};
  margin-right: ${(p) => p.$mr || 0}px;
  background: ${(p) => (p.$on ? "linear-gradient(90deg,#fafafa 0 56px,#d0d0d0 56px 57px,#f5f5f5 57px)" : "transparent")};
`;
const Tray = styled.div`
  margin-left: auto;
  display: flex;
  align-items: center;
`;
const TraySlot = styled.span`
  width: ${(p) => p.$w}px;
  height: 50px;
  display: grid;
  place-items: center;
`;
const Ime = styled.span`
  font: 500 19px/1 "Noto Sans CJK SC", sans-serif;
  padding-bottom: 2px;
`;
const Pinyin = styled.span`
  width: 20px;
  height: 20px;
  border: 1px solid #666;
  background: #f7f7f7;
  font: 15px/17px "Noto Sans CJK SC", sans-serif;
  text-align: center;
`;
const Clock = styled.div`
  width: 84px;
  margin-left: 5px;
  text-align: center;
  line-height: 23px;
  font-size: 15.4px;
  white-space: nowrap;
`;
const Badge = styled.span`
  width: 66px;
  height: 50px;
  border-right: 1px solid #c4c4c4;
  display: grid;
  place-items: center;
  margin-right: 5px;
`;

const Taskbar = () => (
  <TaskbarEl>
    <TaskSlot $w={60}><svg width="20" height="20" viewBox="0 0 20 20"><path d="M0 2.800 8.200 1.600V9.500H0zM9.200 1.500 20 0v9.500H9.200zM0 10.500h8.200v8L0 17.300zM9.200 10.500H20V20L9.200 18.600z" /></svg></TaskSlot>
    <TaskSlot $w={60}><svg width="20" height="20" viewBox="0 0 20 20" fill="none" stroke="#000" strokeWidth="1.300"><circle cx="12.500" cy="7.500" r="6.700" /><path d="M7.700 12.300.5 19.500" /></svg></TaskSlot>
    <TaskSlot $w={9} />
    <TaskSlot $w={51} $mr={6} $pr={2} $run><FolderIcon s={28} /></TaskSlot>
    <TaskSlot $w={61} $run $on $pr={2}><FirefoxIcon s={29} /></TaskSlot>
    <TaskSlot $w={63} $pr={2}>
      <svg width="30" height="28" viewBox="0 0 30 28"><path d="M0 12 15 0l15 12z" fill="#0c59a4" /><path d="M2 9h26L15 20z" fill="#f4f4f4" /><path d="M0 11.500 15 21 30 11.500V28H0z" fill="#28a8ea" /><path d="M30 11.500 0 28h30z" fill="#1b8fdc" opacity=".5" /></svg>
    </TaskSlot>
    <TaskSlot $w={5} />
    {[<QQMusicIcon s={30} />, <WeChatIcon s={30} />, <PhpStormIcon s={30} />,
      <svg width="28" height="28" viewBox="0 0 28 28"><path d="M10 2 27 3v20l-5 3L1 20z" fill="#d6e2e6" /><path d="M9 2l15 1-7 21L1 19z" fill="#69b4c8" /><path d="M9 2l15 1-1.500 4L7 5z" fill="#9dd0dc" /><path d="M25 3h2v20l-2 2z" fill="#8a6d3f" /><path d="M9 2h15" stroke="#555" strokeDasharray="1.500 1" strokeWidth="1.500" /></svg>,
      <TaskMgrBigIcon />].map((ic, i) => <TaskSlot key={i} $w={51} $mr={11} $pr={i > 1 ? 3 : 0} $run>{ic}</TaskSlot>)}
    <Tray>
      <TraySlot $w={30}><svg width="18" height="10" viewBox="0 0 18 10"><path d="M1 9.500l8-8 8 8" fill="none" stroke="#000" strokeWidth="1.400" /></svg></TraySlot>
      <TraySlot $w={30}><svg width="20" height="16" viewBox="0 0 20 16" fill="none" stroke="#000" strokeWidth="1.300"><path d="M6 4.500h12v8.500H5.500V10M19.300 7v3.500M1.500 1v2.500M4.500 1v2.500M.7 3.700h4.600v1.800Q3 8.500.7 5.500zM3 7v6h2.500" /><path d="M7.500 6.500h4v4.700h-4z" fill="#000" /></svg></TraySlot>
      <TraySlot $w={30}><svg width="17" height="17" viewBox="0 0 17 17" fill="none" stroke="#222" strokeWidth="1.200"><path d="M1 16C1 7 7 1.500 15.500 1.500M4.300 16.500C4.300 10 9 5 15.500 5M7.700 16.500q0-8 7.800-8" /><path d="M11 16.500q.3-4.500 4.500-5" /><circle cx="14.500" cy="15" r="1.400" fill="#000" /></svg></TraySlot>
      <TraySlot $w={28}><svg width="20" height="18" viewBox="0 0 20 18" fill="none" stroke="#222" strokeWidth="1.200"><path d="M1 6h3l4-4v14l-4-4H1z" /><path d="M10.500 6.500q1.500 2.500 0 5" /><path d="M13.500 4q3.500 5 0 10M16.500 1.500q5 7.500 0 15" stroke="#aaa" /></svg></TraySlot>
      <TraySlot $w={30}><Ime>中</Ime></TraySlot>
      <TraySlot $w={44}><Pinyin>拼</Pinyin></TraySlot>
      <Clock>17:58<br />2020/12/16</Clock>
      <Badge>
        <svg width="31" height="31" viewBox="0 0 31 31"><path d="M0 1h20v16h-8l-3 4v-4H0z" /><path d="M4 5.500h12M4 9h12M4 12.500h8" stroke="#fff" strokeWidth="1.300" /><circle cx="20" cy="20.500" r="9.700" fill="#cfcfcf" stroke="#8b8b8b" /><text x="15.500" y="25.500" fontSize="15" fontWeight="600" fontFamily="Open Sans, sans-serif">1</text></svg>
      </Badge>
    </Tray>
  </TaskbarEl>
);

export default function App() {
  return (
    <>
      <Global />
      <Screen>
        <Desktop>
          <TaskManager />
          <Browser />
        </Desktop>
        <Taskbar />
      </Screen>
    </>
  );
}
